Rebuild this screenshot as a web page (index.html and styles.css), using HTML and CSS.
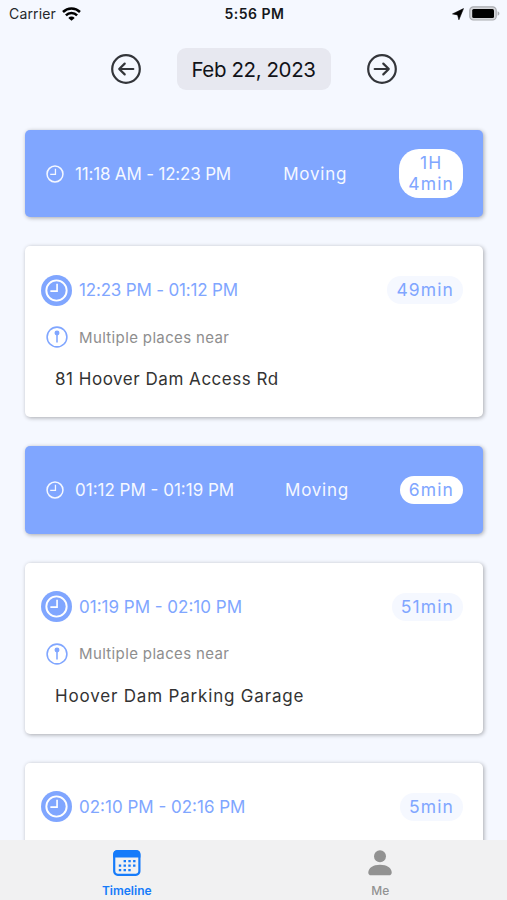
FILE: index.html
```html
<!DOCTYPE html>
<html lang="en">
<head>
    <meta charset="UTF-8">
    <meta name="viewport" content="width=device-width, initial-scale=1.0">
    <title>Timeline</title>
    <link rel="stylesheet" href="styles.css">
</head>
<body>
    <svg class="sprite" aria-hidden="true">
        <symbol id="clock" viewBox="0 0 24 24">
            <circle cx="12" cy="12" r="10.6"/>
            <path d="M12.6 5v7.6H5.6" stroke-width="1.7"/>
        </symbol>
        <symbol id="pin" viewBox="0 0 24 24">
            <circle cx="12" cy="12" r="10.8"/>
            <circle cx="12" cy="7.6" r="2.7" fill="currentColor" stroke="none"/>
            <path d="M12 9v9"/>
        </symbol>
    </svg>

    <div class="statusbar">
        <div class="carrier">
            <span>Carrier</span>
            <svg width="19" height="14" viewBox="0 0 19 14" fill="none" stroke="#000" stroke-width="2.5">
                <path d="M1 5a12.2 12.2 0 0 1 17 0"/>
                <path d="M3.9 8.4a7.8 7.8 0 0 1 11.2 0"/>
                <path d="M9.5 13.8 6.3 10.9a4.4 4.4 0 0 1 6.4 0z" fill="#000" stroke="none"/>
            </svg>
        </div>
        <div class="clock">5:56 PM</div>
        <div class="power">
            <svg width="12" height="12" viewBox="0 0 12 12"><path d="M11.5.6 6.9 11.8 5.6 6.9.5 5.9z" stroke="#000" stroke-width=".6"/></svg>
            <svg width="31" height="15" viewBox="0 0 31 15">
                <rect x=".8" y=".8" width="26.4" height="13.2" rx="3.6" fill="#d5d6da" stroke="#a9abb0" stroke-width="1.2"/>
                <rect x="3.2" y="3" width="21.8" height="9" rx="1.5"/>
                <path d="M28.6 5.2c2.4.8 2.4 3.7 0 4.5z" fill="#a9abb0"/>
            </svg>
        </div>
    </div>

    <div class="datebar">
        <button class="arrow" aria-label="Previous day">
            <svg width="30" height="30" viewBox="0 0 30 30"><circle cx="15" cy="15" r="13.8"/><path d="M22.3 15H8.2M13.7 9.6 8.2 15l5.5 5.4"/></svg>
        </button>
        <button class="date">Feb 22, 2023</button>
        <button class="arrow" aria-label="Next day">
            <svg width="30" height="30" viewBox="0 0 30 30"><circle cx="15" cy="15" r="13.8"/><path d="M7.7 15h14.1M16.3 9.6l5.5 5.4-5.5 5.4"/></svg>
        </button>
    </div>

    <div class="timeline">
        <div class="card moving">
            <svg class="icon"><use href="#clock"/></svg>
            <span class="time tight">11:18 AM - 12:23 PM</span>
            <span class="label">Moving</span>
            <span class="pill tall">1H<br>4min</span>
        </div>

        <div class="card place">
            <div class="row">
                <span class="badge"><svg class="icon"><use href="#clock"/></svg></span>
                <span class="time tight">12:23 PM - 01:12 PM</span>
                <span class="pill">49min</span>
            </div>
            <div class="near"><svg class="icon"><use href="#pin"/></svg><span>Multiple places near</span></div>
            <div class="address">81 Hoover Dam Access Rd</div>
        </div>

        <div class="card moving">
            <svg class="icon"><use href="#clock"/></svg>
            <span class="time">01:12 PM - 01:19 PM</span>
            <span class="label">Moving</span>
            <span class="pill">6min</span>
        </div>

        <div class="card place">
            <div class="row">
                <span class="badge"><svg class="icon"><use href="#clock"/></svg></span>
                <span class="time">01:19 PM - 02:10 PM</span>
                <span class="pill">51min</span>
            </div>
            <div class="near"><svg class="icon"><use href="#pin"/></svg><span>Multiple places near</span></div>
            <div class="address wide">Hoover Dam Parking Garage</div>
        </div>

        <div class="card place">
            <div class="row">
                <span class="badge"><svg class="icon"><use href="#clock"/></svg></span>
                <span class="time">02:10 PM - 02:16 PM</span>
                <span class="pill">5min</span>
            </div>
        </div>
    </div>

    <div class="tabbar">
        <div class="tab active">
            <svg width="30" height="28" viewBox="0 0 30 28">
                <rect x="2.2" y="2.2" width="25.2" height="23.6" rx="3.5" fill="none" stroke="currentColor" stroke-width="2.2"/>
                <path d="M1.2 8.5V5A3.8 3.8 0 0 1 5 1.2h19.6A3.8 3.8 0 0 1 28.4 5v3.5z" fill="currentColor"/>
                <path d="M11.6 12.1h12M6.8 16.6h17M6.8 21.1h12" fill="none" stroke="currentColor" stroke-width="2.4" stroke-dasharray="2.4 2.35"/>
            </svg>
            <span>Timeline</span>
        </div>
        <div class="tab">
            <svg width="30" height="28" viewBox="0 0 30 28" fill="currentColor">
                <circle cx="15" cy="7.3" r="6"/>
                <path d="M3.3 23.5C3.3 19 8 15.7 15 15.7S26.7 19 26.7 23.5c0 1.9-1 2.8-2.8 2.8H6.1c-1.8 0-2.8-.9-2.8-2.8z"/>
            </svg>
            <span>Me</span>
        </div>
    </div>
</body>
</html>
```

FILE: styles.css
```css
* {
    box-sizing: border-box;
}
body {
    margin: 0;
    height: 900px;
    overflow: hidden;
    display: flex;
    flex-direction: column;
    background: #f5f8ff;
    font-family: Inter, "Liberation Sans", sans-serif;
    color: #333;
}
.sprite {
    position: absolute;
    width: 0;
    height: 0;
}
.statusbar {
    height: 27px;
    flex-shrink: 0;
    padding: 0 7px 0 9px;
    display: grid;
    grid-template-columns: 1fr auto 1fr;
    align-items: center;
}
.carrier {
    display: flex;
    align-items: center;
    gap: 6px;
    font-size: 14px;
    letter-spacing: 0.15px;
    color: #26282c;
}
.clock {
    font-size: 14px;
    font-weight: 600;
    letter-spacing: 0.5px;
    color: #16181c;
}
.power {
    display: flex;
    align-items: center;
    justify-content: flex-end;
    gap: 5px;
}
.datebar {
    height: 84px;
    flex-shrink: 0;
    display: flex;
    justify-content: center;
    align-items: center;
    gap: 36px;
}
button {
    padding: 0;
    border: none;
    background: none;
    font-family: inherit;
}
.arrow svg {
    display: block;
    fill: none;
    stroke: #33353a;
    stroke-width: 2.2;
    stroke-linecap: round;
    stroke-linejoin: round;
}
.date {
    width: 154px;
    height: 42px;
    border-radius: 9px;
    background: #e7e8f0;
    font-size: 20.5px;
    letter-spacing: -0.4px;
    color: #111318;
}
.timeline {
    flex: 1;
    min-height: 0;
    padding: 19px 24px 0 25px;
    display: flex;
    flex-direction: column;
    gap: 29px;
}
.card {
    flex-shrink: 0;
    border-radius: 5px;
    box-shadow: 1px 1px 4px rgba(0, 0, 0, 0.32);
}
.moving {
    height: 87.2px;
    padding: 0 20px 0 21px;
    display: flex;
    align-items: center;
    background: #80a6ff;
    color: #f5f8ff;
}
.place {
    height: 171.2px;
    padding: 28px 20px 0 16px;
    background: #fff;
}
.icon {
    fill: none;
    stroke: currentColor;
    stroke-width: 2;
    flex-shrink: 0;
}
.moving .icon {
    width: 18px;
    height: 18px;
    margin-right: 11px;
}
.time {
    font-size: 17px;
    white-space: nowrap;
}
.tight {
    letter-spacing: -0.18px;
}
.label {
    margin: 0 auto;
    font-size: 17px;
    letter-spacing: 0.75px;
}
.pill {
    padding: 0 9px;
    border-radius: 18px;
    background: #f5f8ff;
    color: #80a6ff;
    font-size: 17.5px;
    letter-spacing: 1.1px;
    line-height: 28px;
    text-align: center;
}
.moving .pill {
    background: #fff;
}
.moving .tall {
    padding: 4px 9px;
    border-radius: 20px;
    line-height: 20.5px;
}
.row {
    height: 32px;
    display: flex;
    align-items: center;
    color: #80a6ff;
}
.row .pill {
    margin-left: auto;
}
.badge {
    width: 31px;
    height: 31px;
    margin-right: 7px;
    border-radius: 50%;
    background: #80a6ff;
    color: #fff;
    display: flex;
    align-items: center;
    justify-content: center;
}
.badge .icon {
    width: 23px;
    height: 23px;
}
.near {
    height: 22px;
    margin: 20px 0 0 5px;
    display: flex;
    align-items: center;
    gap: 11px;
    font-size: 15px;
    letter-spacing: 0.36px;
    color: #8e8e8e;
}
.near .icon {
    width: 22px;
    height: 22px;
    color: #80a6ff;
    stroke-width: 1.7;
}
.address {
    margin: 20px 0 0 14px;
    font-size: 17px;
    letter-spacing: 0.53px;
    line-height: 22px;
}
.wide {
    letter-spacing: 0.82px;
}
.tabbar {
    height: 60px;
    flex-shrink: 0;
    display: flex;
    background: #f1f1f2;
}
.tab {
    flex: 1;
    padding-top: 9px;
    display: flex;
    flex-direction: column;
    align-items: center;
    gap: 6px;
    font-size: 12px;
    font-weight: 500;
    line-height: 16px;
    color: #929292;
}
.active {
    color: #167bfa;
    font-weight: 600;
}
```
